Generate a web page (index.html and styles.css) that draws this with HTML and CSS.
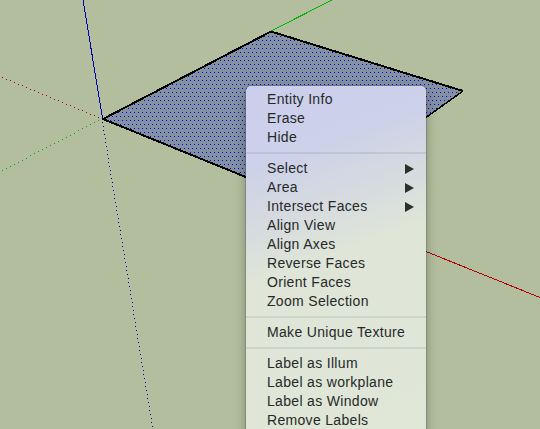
FILE: index.html
```
<!DOCTYPE html>
<html lang="en">
<head>
<meta charset="utf-8">
<title>Model view</title>
<link rel="stylesheet" href="styles.css">
</head>
<body>
<main class="viewport">
<svg class="scene" width="540" height="429" viewBox="0 0 540 429" shape-rendering="crispEdges">
<defs>
<pattern id="dots" width="4" height="8" patternUnits="userSpaceOnUse">
<rect width="4" height="8" fill="#8491a0"/>
<rect x="2" y="0" width="1" height="1" fill="#0000ff"/>
<rect x="0" y="4" width="1" height="1" fill="#0000ff"/>
</pattern>
</defs>
<path class="axis blue" d="M83 0L102.500 118"/>
<path class="axis green" d="M271 31L332 0"/>
<path class="axis red" d="M426 251.500L540 297.500"/>
<path class="face" d="M103 119L271 31.500L463 91L426 117.500L330 188L300 199Z"/>
<path class="edge" d="M300 199L103 119L271 31.500L463 91"/>
<path class="edge thin" d="M463 91L426 117.500L330 188"/>
</svg>
<nav class="menu">
<ul class="group">
<li>Entity Info</li>
<li>Erase</li>
<li>Hide</li>
</ul>
<ul class="group">
<li class="parent">Select</li>
<li class="parent">Area</li>
<li class="parent">Intersect Faces</li>
<li>Align View</li>
<li>Align Axes</li>
<li>Reverse Faces</li>
<li>Orient Faces</li>
<li>Zoom Selection</li>
</ul>
<ul class="group">
<li>Make Unique Texture</li>
</ul>
<ul class="group">
<li>Label as Illum</li>
<li>Label as workplane</li>
<li>Label as Window</li>
<li>Remove Labels</li>
</ul>
</nav>
</main>
<script src="axes.js"></script>
</body>
</html>
```
FILE: axes.js
```
// Negative axis halves: one pixel every four along the major direction.
const scene = document.querySelector('.scene');
const axes = [
  { color: '#b40000', x: 2, y: 77, dx: 4, dy: 1.667, count: 25 },
  { color: '#00b400', x: 2, y: 170, dx: 4, dy: -2.083, count: 25 },
  { color: '#0000b4', x: 102.4, y: 122, dx: 0.658, dy: 4, count: 77 }
];
for (const a of axes) {
  let d = '';
  for (let i = 0; i < a.count; i++) {
    d += `M${Math.floor(a.x + a.dx * i)} ${Math.round(a.y + a.dy * i)}h1v1h-1z`;
  }
  const path = document.createElementNS('http://www.w3.org/2000/svg', 'path');
  path.setAttribute('d', d);
  path.setAttribute('fill', a.color);
  scene.append(path);
}
```
FILE: styles.css
```
body {
  margin: 0;
}
.viewport {
  position: relative;
  width: 540px;
  height: 429px;
  overflow: hidden;
  background: #b2be9e;
}
.scene {
  display: block;
}
.axis {
  fill: none;
  stroke-width: 1;
}
.blue {
  stroke: #0000b4;
}
.red {
  stroke: #b40000;
}
.green {
  stroke: #00b400;
}
.face {
  fill: url(#dots);
}
.edge {
  fill: none;
  stroke: #000;
  stroke-width: 2;
}
.thin {
  stroke-width: 1.5;
}
.menu {
  position: absolute;
  left: 246px;
  top: 86px;
  box-sizing: border-box;
  width: 180px;
  height: 360px;
  padding-top: 4px;
  border-radius: 5px;
  background: linear-gradient(160deg, #cbcfec 0, #cdd1e9 20%, #d5dbdf 34%, #dfe5d7 47%, #e0e7d7 100%);
  box-shadow: 0 0 0 1px rgba(0, 0, 0, 0.14), 0 5px 12px rgba(0, 0, 0, 0.3);
  color: #26292a;
  font: 14px/19px "Liberation Sans", Arial, sans-serif;
  letter-spacing: 0.32px;
}
.group {
  margin: 0;
  padding: 0;
  list-style: none;
}
.group + .group {
  margin-top: 5px;
  padding-top: 5px;
  border-top: 2px solid rgba(80, 90, 100, 0.13);
}
.group li {
  display: flex;
  align-items: center;
  justify-content: space-between;
  height: 19px;
  padding: 0 12px 0 21px;
  white-space: nowrap;
}
.parent::after {
  content: "";
  border-left: 9px solid #2b302b;
  border-top: 5px solid transparent;
  border-bottom: 5px solid transparent;
}
```
